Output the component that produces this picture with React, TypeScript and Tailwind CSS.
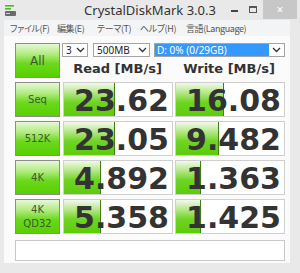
import React from 'react';

interface Row {
  label: string[];
  read: string;
  readBar: number;
  write: string;
  writeBar: number;
}

const ROWS: Row[] = [
  { label: ['Seq'], read: '23.62', readBar: 51, write: '16.08', writeBar: 48 },
  { label: ['512K'], read: '23.05', readBar: 51, write: '9.482', writeBar: 43 },
  { label: ['4K'], read: '4.892', readBar: 37, write: '1.363', writeBar: 25 },
  { label: ['4K', 'QD32'], read: '5.358', readBar: 37, write: '1.425', writeBar: 25 },
];

const MENU = [
  { text: 'ファイル(F)', w: 'w-[47px]' },
  { text: '編集(E)', w: 'w-[40px]' },
  { text: 'テーマ(T)', w: 'w-[43px]' },
  { text: 'ヘルプ(H)', w: 'w-[46px]' },
  { text: '言語(Language)', w: 'w-[70px]' },
];

const Chevron = () => (
  <svg width="9" height="6" viewBox="0 0 9 6" className="shrink-0">
    <path d="M1 1 L4.5 4.5 L8 1" fill="none" stroke="#333" strokeWidth="1.3" />
  </svg>
);

const GreenButton: React.FC<{ lines: string[]; big?: boolean }> = ({ lines, big }) => (
  <div className="w-[45px] h-[35px] shrink-0 border border-[#8c8c8c] bg-[linear-gradient(to_bottom,#e6f8d6_0%,#b4ec84_30%,#6ad81c_60%,#58d000_100%)] flex flex-col items-center justify-center text-[#3b5a2c] font-['DejaVu_Sans',sans-serif] leading-[14px]">
    {lines.map(l => (
      <span key={l} className={big ? 'text-[12px]' : 'text-[10px]'}>{l}</span>
    ))}
  </div>
);

const Cell: React.FC<{ value: string; bar: number; extra?: string }> = ({ value, bar, extra }) => (
  <div
    className={`w-[110px] h-[35px] shrink-0 border border-[#cfcfcf] bg-white bg-no-repeat bg-[linear-gradient(to_left,#3f7f14_1px,transparent_1px),linear-gradient(to_bottom,#f2f9ec_0%,#b8e88c_28%,#6fd424_58%,#5ccc08_100%)] flex items-center justify-end pr-[3px] pt-[3px] text-[30px] leading-none font-bold text-[#333] font-['DejaVu_Sans',sans-serif] ${extra ?? ''}`}
    style={{ backgroundSize: `${bar}px 100%` }}
  >
    {value}
  </div>
);

export default function App() {
  return (
    <div className="w-[300px] h-[273px] bg-[#e9e9e9] flex flex-col overflow-hidden font-['Noto_Sans','Noto_Sans_CJK_JP',sans-serif]">
      {/* title bar */}
      <div className="h-[20px] flex items-center shrink-0">
        <div className="w-[80px] pl-[5px] flex items-center">
          <svg width="11" height="13" viewBox="0 0 11 13">
            <rect x="0" y="1" width="9" height="1.6" fill="#4cba2c" />
            <rect x="0" y="4" width="6" height="1.6" fill="#4cba2c" />
            <rect x="0" y="7" width="11" height="5" rx="1" fill="#6a6a6a" />
            <rect x="1" y="9" width="4" height="1" fill="#d0d0d0" />
          </svg>
        </div>
        <div className="flex-1 text-center text-[13px] text-[#333] leading-none pt-[1px]">CrystalDiskMark 3.0.3</div>
        <div className="w-[80px] flex items-start h-full justify-end">
          <div className="w-[18px] h-full flex items-center justify-center">
            <div className="w-[7px] h-[2px] bg-[#444] mt-[2px]" />
          </div>
          <div className="w-[20px] h-full flex items-center justify-center">
            <div className="w-[8px] h-[7px] border border-[#555] border-t-2 mb-[1px]" />
          </div>
          <div className="w-[34px] h-[19px] bg-[#c7c7c7] flex items-center justify-center text-white text-[12px] leading-none mr-[3px]">×</div>
        </div>
      </div>

      {/* window body */}
      <div className="flex-1 flex pl-[4px] pr-[10px] pb-[10px]">
        <div className="flex-1 flex flex-col bg-[#fbfbfb]">
          {/* menu bar */}
          <div className="h-[16px] bg-[#f3f4f5] flex items-center pl-[6px] text-[9px] tracking-[-0.4px] text-[#555] leading-none font-['Noto_Sans_CJK_JP',sans-serif] [font-feature-settings:'palt'] shrink-0">
            {MENU.map(m => (
              <span key={m.text} className={`${m.w} whitespace-nowrap`}>{m.text}</span>
            ))}
          </div>

          {/* content */}
          <div className="flex flex-col pl-[11px] pt-[7px] gap-[4px]">
            <div className="flex h-[35px]">
              <GreenButton lines={['All']} big />
              <div className="flex flex-col ml-[2px]">
                <div className="flex h-[14px] text-[10px] text-[#222] leading-none">
                  <div className="w-[26px] border border-[#a5a5a5] bg-white flex items-center justify-between pl-[3px] pr-[2px]">
                    <span>3</span>
                    <Chevron />
                  </div>
                  <div className="w-[57px] ml-[5px] border border-[#a5a5a5] bg-white flex items-center justify-between pl-[3px] pr-[2px]">
                    <span>500MB</span>
                    <Chevron />
                  </div>
                  <div className="w-[131px] ml-[4px] border border-[#a5a5a5] bg-white flex items-center">
                    <div className="w-[114px] h-full bg-[#3399ff] text-white flex items-center pl-[2px]">D: 0% (0/29GB)</div>
                    <div className="flex-1 flex justify-center"><Chevron /></div>
                  </div>
                </div>
                <div className="flex flex-1 items-center pt-[2px] text-[13px] font-bold text-[#333] font-['DejaVu_Sans',sans-serif] leading-none">
                  <div className="w-[111px] text-center">Read [MB/s]</div>
                  <div className="w-[112px] text-center">Write [MB/s]</div>
                </div>
              </div>
            </div>

            {ROWS.map(r => (
              <div key={r.read} className="flex">
                <GreenButton lines={r.label} />
                <Cell value={r.read} bar={r.readBar} extra="ml-[3px]" />
                <Cell value={r.write} bar={r.writeBar} extra="ml-[2px]" />
              </div>
            ))}

            <div className="mt-[2px] w-[270px] h-[21px] border border-[#c8c8c8] bg-white" />
          </div>
        </div>
      </div>
    </div>
  );
}
